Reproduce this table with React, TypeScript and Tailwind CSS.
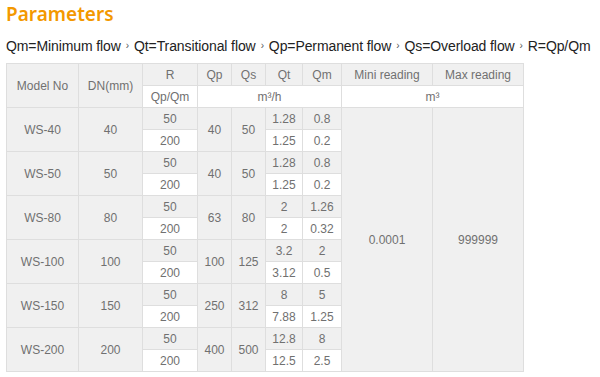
import React from "react";

const rows = [
  { m: "WS-40", dn: "40", qp: "40", qs: "50", qt: ["1.28", "1.25"], qm: ["0.8", "0.2"] },
  { m: "WS-50", dn: "50", qp: "40", qs: "50", qt: ["1.28", "1.25"], qm: ["0.8", "0.2"] },
  { m: "WS-80", dn: "80", qp: "63", qs: "80", qt: ["2", "2"], qm: ["1.26", "0.32"] },
  { m: "WS-100", dn: "100", qp: "100", qs: "125", qt: ["3.2", "3.12"], qm: ["2", "0.5"] },
  { m: "WS-150", dn: "150", qp: "250", qs: "312", qt: ["8", "7.88"], qm: ["5", "1.25"] },
  { m: "WS-200", dn: "200", qp: "400", qs: "500", qt: ["12.8", "12.5"], qm: ["8", "2.5"] },
];

const g = "bg-[#f0f0f0] border border-[#dedede] text-center align-middle p-0";
const w = "bg-white border border-[#dedede] text-center align-middle p-0";

function Sep() {
  return <span className="inline-block mx-[5px] text-[10px] align-[2px] text-[#555]">›</span>;
}

export default function App() {
  return (
    <div className="w-[600px] h-[377px] bg-white pl-[6px] overflow-hidden" style={{ fontFamily: '"Liberation Sans", Arial, sans-serif' }}>
      <h1 className="text-[19px] leading-[28px] font-semibold text-[#f39800]" style={{ fontFamily: '"Noto Sans", sans-serif' }}>
        Parameters
      </h1>
      <p className="mt-[9px] text-[14px] leading-[18px] text-[#222] tracking-[-0.1px] whitespace-nowrap">
        Qm=Minimum flow<Sep />Qt=Transitional flow<Sep />Qp=Permanent flow<Sep />Qs=Overload flow<Sep />R=Qp/Qm
      </p>
      <table className="mt-[8px] border-collapse table-fixed w-[517px] text-[12px] text-[#707070] border border-[#dedede]">
        <colgroup>
          <col className="w-[72px]" />
          <col className="w-[64px]" />
          <col className="w-[55px]" />
          <col className="w-[34px]" />
          <col className="w-[34px]" />
          <col className="w-[37px]" />
          <col className="w-[39px]" />
          <col className="w-[91px]" />
          <col className="w-[91px]" />
        </colgroup>
        <tbody>
          <tr className="h-[22px]">
            <td rowSpan={2} className={g}>Model No</td>
            <td rowSpan={2} className={g}>DN(mm)</td>
            <td className={g}>R</td>
            <td className={g}>Qp</td>
            <td className={g}>Qs</td>
            <td className={g}>Qt</td>
            <td className={g}>Qm</td>
            <td className={g}>Mini reading</td>
            <td className={g}>Max reading</td>
          </tr>
          <tr className="h-[22px]">
            <td className={w}>Qp/Qm</td>
            <td colSpan={4} className={w}>m³/h</td>
            <td colSpan={2} className={w}>m³</td>
          </tr>
          {rows.map((r, i) => (
            <React.Fragment key={r.m}>
              <tr className="h-[22px]">
                <td rowSpan={2} className={g}>{r.m}</td>
                <td rowSpan={2} className={g}>{r.dn}</td>
                <td className={g}>50</td>
                <td rowSpan={2} className={g}>{r.qp}</td>
                <td rowSpan={2} className={g}>{r.qs}</td>
                <td className={g}>{r.qt[0]}</td>
                <td className={g}>{r.qm[0]}</td>
                {i === 0 && (
                  <>
                    <td rowSpan={12} className={g}>0.0001</td>
                    <td rowSpan={12} className={g}>999999</td>
                  </>
                )}
              </tr>
              <tr className="h-[22px]">
                <td className={w}>200</td>
                <td className={w}>{r.qt[1]}</td>
                <td className={w}>{r.qm[1]}</td>
              </tr>
            </React.Fragment>
          ))}
        </tbody>
      </table>
    </div>
  );
}
